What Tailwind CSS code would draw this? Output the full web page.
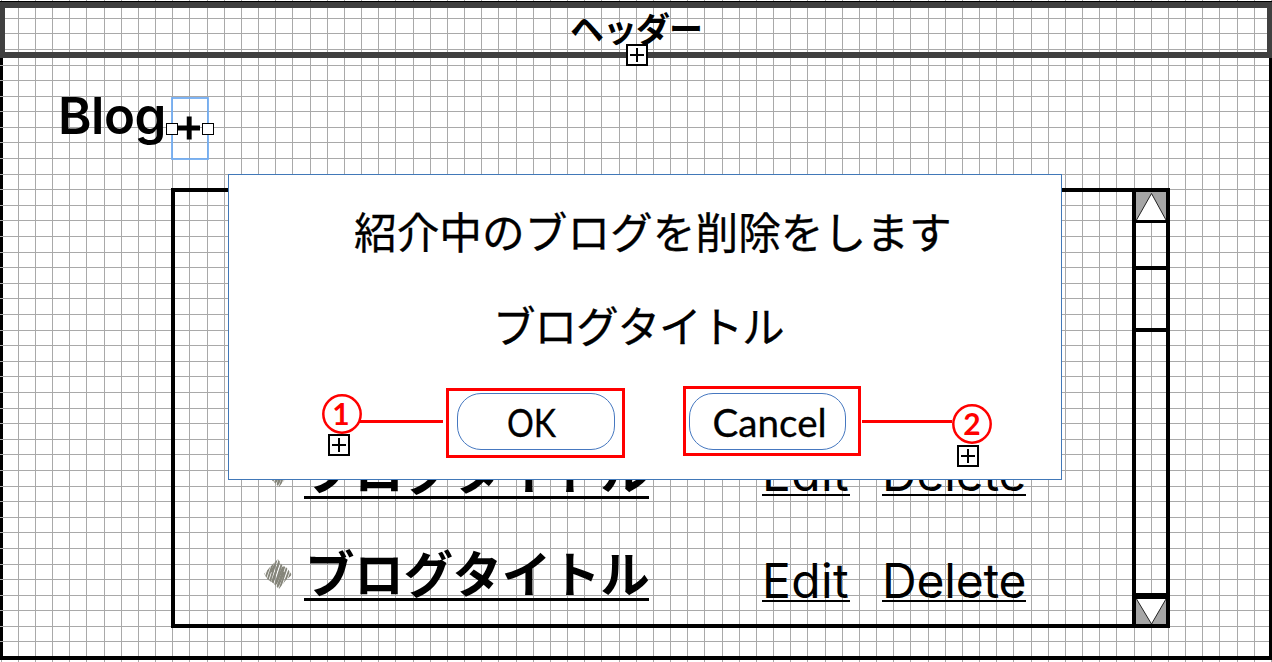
<!DOCTYPE html>
<html lang="ja">
<head>
<meta charset="utf-8">
<title>Blog</title>
<script src="https://cdn.jsdelivr.net/npm/@tailwindcss/browser@4"></script>
</head>
<body class="bg-white text-black font-['Inter','Noto_Sans_CJK_JP',sans-serif]">
<svg width="0" height="0" class="absolute">
  <defs>
    <symbol id="expand" viewBox="0 0 22 22"><rect x="1" y="1" width="20" height="20" fill="#fff" stroke="#000" stroke-width="2"/><path d="M4 11H18M11 4V18" stroke="#000" stroke-width="2"/></symbol>
    <symbol id="diamond" viewBox="0 0 30 32">
      <clipPath id="dc"><path d="M15 1L19 7L24 10L29 17L23 22L16 31L10 25L5 22L1 16L7 9Z"/></clipPath>
      <g clip-path="url(#dc)" stroke="#85857a" stroke-width="1.9" fill="none">
        <path d="M-3 26L5 4M0 27L8 4M2 30L11 2M5 30L14 0M8 31L17 0M10 33L20 2M13 33L23 4M16 33L25 6M19 32L28 7M22 31L30 9M25 30L33 10"/>
        <path d="M9 24L16 5M13 26L20 9M8 14L12 7M15 28L21 14" stroke-width="2"/>
      </g>
    </symbol>
  </defs>
</svg>
<div class="relative w-[1272px] h-[662px] overflow-hidden">
  <svg id="grid" class="absolute inset-0" width="1272" height="662" shape-rendering="crispEdges"><path id="gv" fill="#a9a9a9"/></svg>

  <div class="relative flex flex-col h-full pt-px">
    <header class="relative h-[57px] border-t border-black">
      <div class="h-[56px] border-x-[5px] border-y-[6px] border-[#404040] flex justify-center">
        <h1 class="relative left-0 -top-[3px] text-[34px] leading-[50px] font-bold tracking-[-1px] whitespace-nowrap">ヘッダー</h1>
      </div>
      <svg class="absolute left-[626px] top-[42px]" width="22" height="22"><use href="#expand"/></svg>
    </header>

    <main class="h-[602px] border-x-[3px] border-b-4 border-black">
      <div class="flex h-[130px] pl-[55px]">
        <h2 class="pt-[27px] w-[111px] text-[51px] leading-[62px] font-semibold tracking-[-0.5px]">Blog</h2>
        <svg class="mt-[37px] -ml-[5px]" width="52" height="66" viewBox="164 95 52 66">
          <rect x="172" y="98" width="36" height="61" fill="none" stroke="#73adf2" stroke-width="1.8"/>
          <path d="M178 128H200M189.200 116.500V139.500" stroke="#000" stroke-width="4.900"/>
          <rect x="166.500" y="123.500" width="11" height="11" fill="#fff" stroke="#000"/>
          <rect x="202.500" y="123.500" width="11" height="11" fill="#fff" stroke="#000"/>
        </svg>
      </div>
      <section class="ml-[168px] w-[999px] h-[440px] border-4 border-black flex">
        <ul class="w-[957px] pl-[88px] pt-[252px]">
          <li class="flex h-[104px]">
            <svg class="mt-[12px]" width="30" height="32"><use href="#diamond"/></svg>
            <a class="ml-[11px] h-[55px] w-[345px] border-b-[3px] border-black pl-[1px] text-[49.5px] leading-[56px] font-bold tracking-[-0.3px] whitespace-nowrap">ブログタイトル</a>
            <a class="ml-[113px] mt-[2px] h-[50px] w-[88px] border-b-2 border-black text-[48px] leading-[62px] tracking-[0.4px] whitespace-nowrap"><span class="block -mt-[3px]">Edit</span></a>
            <a class="ml-[32px] mt-[2px] h-[50px] w-[144px] border-b-2 border-black text-[48px] leading-[62px] tracking-[-0.2px] whitespace-nowrap"><span class="block -mt-[3px]">Delete</span></a>
          </li>
          <li class="flex">
            <svg class="mt-[10px]" width="30" height="32"><use href="#diamond"/></svg>
            <a class="ml-[11px] h-[53px] w-[345px] border-b-[3px] border-black pl-[1px] text-[49.5px] leading-[54px] font-bold tracking-[-0.3px] whitespace-nowrap">ブログタイトル</a>
            <a class="ml-[113px] mt-[4px] h-[50px] w-[88px] border-b-2 border-black text-[48px] leading-[62px] tracking-[0.4px] whitespace-nowrap"><span class="block -mt-[2px]">Edit</span></a>
            <a class="ml-[32px] mt-[4px] h-[50px] w-[144px] border-b-2 border-black text-[48px] leading-[62px] tracking-[-0.2px] whitespace-nowrap"><span class="block -mt-[2px]">Delete</span></a>
          </li>
        </ul>
        <div class="w-[34px] border-l-4 border-black flex flex-col">
          <svg class="h-[28px] bg-[#a6a6a6]" width="30" height="28"><path d="M.5 28L15.500 1.500L30 28" fill="#fff" stroke="#222"/></svg>
          <div class="h-[50px] border-t-[3px] border-b-4 border-black box-border"></div>
          <div class="h-[62px] border-b-4 border-black"></div>
          <div class="grow"></div>
          <div class="h-[6px] bg-black"></div>
          <svg class="h-[25px] bg-[#a6a6a6]" width="30" height="25"><path d="M.5 0L15.500 25L30 0" fill="#fff" stroke="#222"/></svg>
        </div>
      </section>
    </main>
  </div>

  <svg class="absolute inset-0" width="3" height="662" shape-rendering="crispEdges"><path id="ticks" fill="#a9a9a9"/></svg>

  <div role="dialog" class="absolute left-[228px] top-[174px] w-[834px] h-[306px] bg-white border border-[#4178b8]">
    <p class="pt-[28px] pl-[125px] text-[42.7px] leading-[62px] whitespace-nowrap [-webkit-text-stroke:0.3px_black]">紹介中のブログを削除をします</p>
    <p class="mt-[32px] pl-[264px] text-[42.7px] leading-[62px] tracking-[-1.2px] whitespace-nowrap [-webkit-text-stroke:0.3px_black]">ブログタイトル</p>
    <div class="absolute left-[217px] top-[213px] w-[179px] h-[70px] border-[3px] border-[#ff0000] pl-2 pt-[2px]">
      <button class="w-[158px] h-[57px] rounded-[24px] border border-[#4678c0] font-['Lato'] text-[39px] flex items-center justify-center pr-[10px] [-webkit-text-stroke:0.3px_black]"><span class="inline-block scale-x-[.86] translate-x-px translate-y-px">OK</span></button>
    </div>
    <div class="absolute left-[454px] top-[211px] w-[178px] h-[70px] border-[3px] border-[#ff0000] pl-[3px] pt-[4px]">
      <button class="w-[157px] h-[57px] rounded-[24px] border border-[#4678c0] font-['Lato'] text-[39px] flex items-center justify-center [-webkit-text-stroke:0.3px_black]"><span class="inline-block scale-x-[.99] translate-x-[2px] translate-y-px">Cancel</span></button>
    </div>
    <div class="absolute left-[130px] top-[245px] w-[84px] h-[3px] bg-[#ff0000]"></div>
    <div class="absolute left-[633px] top-[245px] w-[90px] h-[3px] bg-[#ff0000]"></div>
    <svg class="absolute left-[93px] top-[219px]" width="40" height="40"><circle cx="20" cy="20" r="18.700" fill="#fff" stroke="#f00" stroke-width="2.500"/><text x="19" y="30.500" text-anchor="middle" fill="#f00" class="font-['Lato'] font-bold text-[30px]">1</text></svg>
    <svg class="absolute left-[723px] top-[229px]" width="40" height="40"><circle cx="20" cy="20" r="18.700" fill="#fff" stroke="#f00" stroke-width="2.500"/><text x="20" y="30.500" text-anchor="middle" fill="#f00" class="font-['Lato'] font-bold text-[30px]">2</text></svg>
    <svg class="absolute left-[99px] top-[259px]" width="22" height="22"><use href="#expand"/></svg>
    <svg class="absolute left-[728px] top-[270px]" width="22" height="22"><use href="#expand"/></svg>
  </div>
</div>
<script>
  // The grid steps unevenly so that each line lands on a whole pixel.
  const ys = [2,18,33,49,65,80,96,111,127,142,158,174,189,205,220,236,252,267,283,298,314,330,345,361,376,392,408,423,439,454,470,486,501,517,532,548,564,579,595,610,626,641,657];
  let d = ys.map(y => `M0 ${y}h1272v1H0z`).join('');
  for (let n = 0; n < 13; n++) for (const o of [1,18,35,52,69,86]) d += `M${103*n+o} 0h1v662h-1z`;
  document.getElementById('gv').setAttribute('d', d);
  document.getElementById('ticks').setAttribute('d', ys.filter(y => y > 60 && y < 650).map(y => `M0 ${y}h3v1H0z`).join(''));
</script>
</body>
</html>
